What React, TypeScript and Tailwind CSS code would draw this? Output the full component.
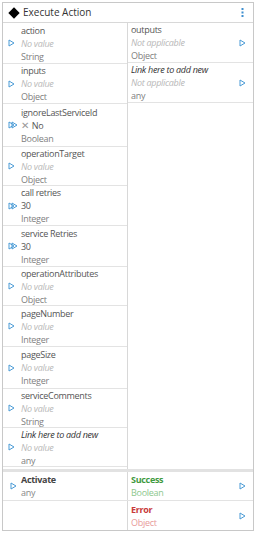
import React from 'react';

type Param = {
  name: string;
  value?: string;
  type: string;
  multi?: boolean;
  link?: boolean;
  h: string;
};

const inputs: Param[] = [
  { name: 'action', type: 'String', h: 'h-[41px]' },
  { name: 'inputs', type: 'Object', h: 'h-[40px]' },
  { name: 'ignoreLastServiceId', value: 'No', type: 'Boolean', multi: true, h: 'h-[43px]' },
  { name: 'operationTarget', type: 'Object', h: 'h-[39px]' },
  { name: 'call retries', value: '30', type: 'Integer', multi: true, h: 'h-[40px]' },
  { name: 'service Retries', value: '30', type: 'Integer', multi: true, h: 'h-[41px]' },
  { name: 'operationAttributes', type: 'Object', h: 'h-[39px]' },
  { name: 'pageNumber', type: 'Integer', h: 'h-[41px]' },
  { name: 'pageSize', type: 'Integer', h: 'h-[42px]' },
  { name: 'serviceComments', type: 'String', h: 'h-[39px]' },
  { name: 'Link here to add new', type: 'any', link: true, h: 'h-[39px]' },
];

const Arrow = ({ double }: { double?: boolean }) => (
  <svg width={double ? 10 : 7} height="8" viewBox={double ? '0 0 10 8' : '0 0 7 8'} className="shrink-0">
    <path d="M1 1 L6 4 L1 7 Z" fill="none" stroke="#4a9bd6" strokeWidth="1" strokeLinejoin="round" />
    {double && <path d="M4 1 L9 4 L4 7 Z" fill="none" stroke="#4a9bd6" strokeWidth="1" strokeLinejoin="round" />}
  </svg>
);

const InputRow = ({ p }: { p: Param }) => (
  <div className={`${p.h} border-b border-[#e3e3e3] flex flex-col justify-center pl-[18px] leading-[13px]`}>
    <div className={p.link ? 'italic text-[#333]' : 'text-[#555]'}>{p.name}</div>
    <div className="flex items-center -ml-[13px]">
      <span className="w-[13px] flex">
        <Arrow double={p.multi} />
      </span>
      {p.value ? (
        <span className="text-[#555] flex items-center">
          {p.value === 'No' && <span className="text-[#999] text-[10px] mr-[3px]">✕</span>}
          {p.value}
        </span>
      ) : (
        <span className="italic text-[#b8b8b8]">No value</span>
      )}
    </div>
    <div className="text-[#808080]">{p.type}</div>
  </div>
);

const OutputRow = ({ name, type, link }: { name: string; type: string; link?: boolean }) => (
  <div className="h-[40px] border-b border-[#e3e3e3] flex items-center pl-[3px] pr-[7px] leading-[13px]">
    <div className="flex-1">
      <div className={link ? 'italic text-[#333]' : 'text-[#555]'}>{name}</div>
      <div className="italic text-[#b8b8b8]">Not applicable</div>
      <div className="text-[#808080]">{type}</div>
    </div>
    <Arrow />
  </div>
);

export default function App() {
  return (
    <div className="w-[256px] h-[533px] bg-white p-[2px]" style={{ fontFamily: '"Open Sans", sans-serif' }}>
      <div className="border border-[#c8c8c8] h-full flex flex-col text-[9px] tracking-[-0.3px]">
        <div className="h-[20px] shrink-0 flex items-center border-b border-[#d8d8d8] px-[6px]">
          <span className="w-[8px] h-[8px] bg-black rotate-45 ml-[1px] mr-[5px]" />
          <span className="text-[10px] tracking-normal text-[#333] flex-1">Execute Action</span>
          <svg width="3" height="9" viewBox="0 0 3 9" className="mr-[3px]">
            <rect x="0.5" y="0" width="2" height="2" fill="#3f8fd0" />
            <rect x="0.5" y="3.5" width="2" height="2" fill="#3f8fd0" />
            <rect x="0.5" y="7" width="2" height="2" fill="#3f8fd0" />
          </svg>
        </div>
        <div className="flex flex-1">
          <div className="w-[125px] border-r border-[#d8d8d8]">
            {inputs.map((p) => (
              <InputRow key={p.name} p={p} />
            ))}
          </div>
          <div className="flex-1">
            <OutputRow name="outputs" type="Object" />
            <OutputRow name="Link here to add new" type="any" link />
          </div>
        </div>
        <div className="border-t-[3px] border-[#e2e2e2] flex flex-col shrink-0">
          <div className="flex h-[29px] border-b border-[#e3e3e3]">
            <div className="w-[125px] border-r border-[#d8d8d8] flex items-center pl-[7px] leading-[13px]">
              <span className="w-[11px] flex"><Arrow /></span>
              <div>
                <div className="font-bold text-[#444]">Activate</div>
                <div className="text-[#888]">any</div>
              </div>
            </div>
            <div className="flex-1 flex items-center pl-[3px] pr-[7px] leading-[13px]">
              <div className="flex-1">
                <div className="font-bold text-[#3f9a3f]">Success</div>
                <div className="text-[#8cc78c]">Boolean</div>
              </div>
              <Arrow />
            </div>
          </div>
          <div className="flex h-[29px]">
            <div className="w-[125px] border-r border-[#d8d8d8]" />
            <div className="flex-1 flex items-center pl-[3px] pr-[7px] leading-[13px]">
              <div className="flex-1">
                <div className="font-bold text-[#c83a3a]">Error</div>
                <div className="text-[#e89a9a]">Object</div>
              </div>
              <Arrow />
            </div>
          </div>
        </div>
      </div>
    </div>
  );
}
